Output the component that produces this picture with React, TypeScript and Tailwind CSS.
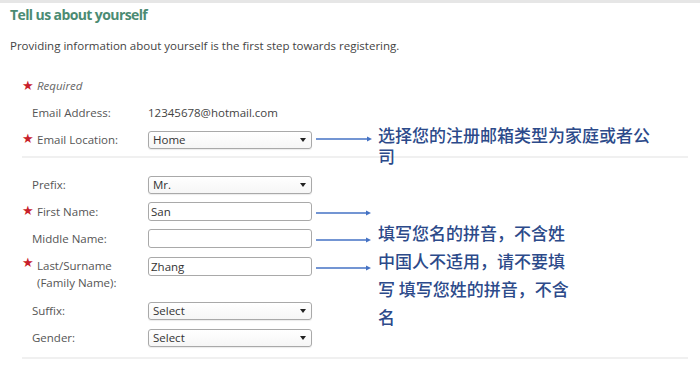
import React from "react";

const Star = () => (
  <span className="inline-block w-[15px] text-[#c8202a] text-[13px] leading-none relative top-[-1px]">★</span>
);

function Select({ value }: { value: string }) {
  return (
    <div className="w-[164px] h-[18px] border border-[#a9a9a9] rounded-[3px] bg-gradient-to-b from-white to-[#f6f6f6] flex items-center justify-between pl-[4px] pr-[5px] text-[11.5px] text-[#333] shadow-[0_1px_1px_rgba(0,0,0,0.08)]">
      <span>{value}</span>
      <svg width="6" height="4" viewBox="0 0 6 4"><path d="M0 0h6L3 4z" fill="#222" /></svg>
    </div>
  );
}

function Input({ value }: { value: string }) {
  return (
    <div className="w-[164px] h-[19px] border border-[#a9a9a9] rounded-[3px] bg-white flex items-center pl-[2px] text-[11.5px] text-[#333]">
      {value}
    </div>
  );
}

function Row({
  label,
  star,
  children,
}: {
  label: React.ReactNode;
  star?: boolean;
  children: React.ReactNode;
}) {
  return (
    <div className="flex items-center h-[27px]">
      <div className={`w-[126px] text-[11.5px] text-[#555] flex items-center ${star ? "" : "pl-[10px]"}`}>
        {star && <Star />}
        <span>{label}</span>
      </div>
      {children}
    </div>
  );
}

function Arrow({ top, left, width }: { top: number; left: number; width: number }) {
  return (
    <svg
      className="absolute"
      style={{ top: top - 4, left }}
      width={width}
      height="8"
      viewBox={`0 0 ${width} 8`}
    >
      <line x1="0" y1="4" x2={width - 4} y2="4" stroke="#4472c4" strokeWidth="1.3" />
      <path d={`M${width - 5} 1.5 L${width} 4 L${width - 5} 6.5 z`} fill="#4472c4" />
    </svg>
  );
}

export default function App() {
  return (
    <div className="relative w-[700px] h-[370px] bg-white overflow-hidden font-['Open_Sans',sans-serif]">
      <div className="border-t-[3px] border-[#e6e6e6]" />
      <div className="pl-[10px] mt-[2px] text-[14px] leading-[20px] font-bold tracking-[-0.6px] text-[#4b8b73]">
        Tell us about yourself
      </div>
      <div className="pl-[10px] mt-[13px] text-[11.5px] leading-[16px] text-[#444]">
        Providing information about yourself is the first step towards registering.
      </div>

      <div className="pl-[22px] mt-[19px] w-[688px]">
        <div className="flex items-center h-[26px] text-[11.5px]">
          <Star />
          <span className="italic text-[#666]">Required</span>
        </div>
        <div className="flex items-center h-[27px]">
          <div className="w-[126px] pl-[10px] text-[11.5px] text-[#555]">Email Address:</div>
          <span className="text-[11.5px] text-[#444]">12345678@hotmail.com</span>
        </div>
        <div className="h-[27px] flex items-center">
          <div className="w-[126px] text-[11.5px] text-[#555] flex items-center">
            <Star />
            <span>Email Location:</span>
          </div>
          <Select value="Home" />
        </div>
        <div className="mt-[3px] h-[2px] bg-[#f0f0f0]" />

        <div className="mt-[13px]">
          <Row label="Prefix:">
            <Select value="Mr." />
          </Row>
          <Row label="First Name:" star>
            <Input value="San" />
          </Row>
          <Row label="Middle Name:">
            <Input value="" />
          </Row>
          <div className="flex items-start pt-[5px] h-[45px]">
            <div className="w-[126px] text-[11.5px] leading-[17px] text-[#555] flex items-start">
              <Star />
              <span>
                Last/Surname
                <br />
                (Family Name):
              </span>
            </div>
            <Input value="Zhang" />
          </div>
          <Row label="Suffix:">
            <Select value="Select" />
          </Row>
          <Row label="Gender:">
            <Select value="Select" />
          </Row>
        </div>
        <div className="mt-[6px] h-[2px] bg-[#f0f0f0]" />
      </div>

      <Arrow top={139} left={316} width={56} />
      <div className="absolute left-[378px] top-[124px] w-[280px] text-[17px] leading-[21px] font-medium text-[#2c4a8a] font-['Noto_Sans_CJK_SC',sans-serif]">
        选择您的注册邮箱类型为家庭或者公司
      </div>

      <Arrow top={213} left={316} width={55} />
      <Arrow top={240} left={316} width={55} />
      <Arrow top={268} left={316} width={55} />
      <div className="absolute left-[378px] top-[219px] w-[198px] text-[17px] leading-[28px] font-medium text-[#2c4a8a] font-['Noto_Sans_CJK_SC',sans-serif]">
        填写您名的拼音，不含姓中国人不适用，请不要填写 填写您姓的拼音，不含名
      </div>
    </div>
  );
}
